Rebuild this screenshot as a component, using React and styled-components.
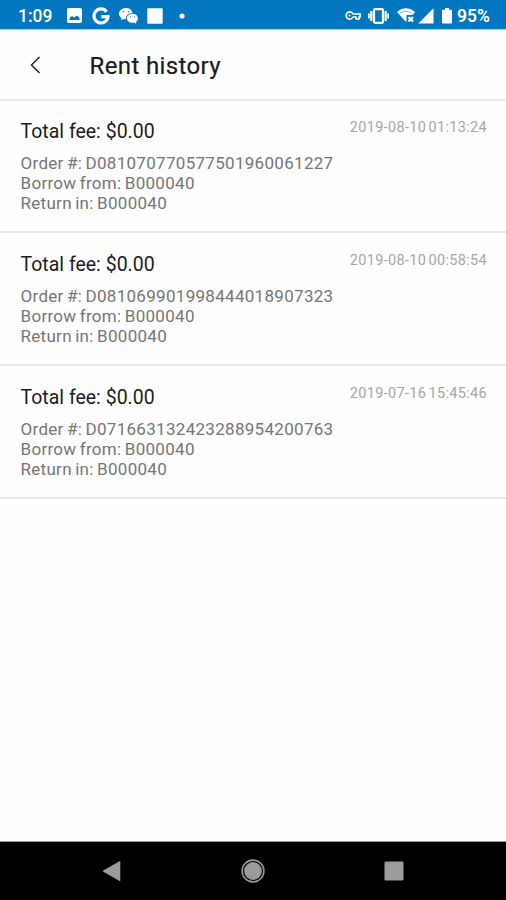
import React from 'react';
import styled, { createGlobalStyle } from 'styled-components';

const GlobalStyle = createGlobalStyle`
  * {
    box-sizing: border-box;
  }

  body {
    margin: 0;
    background: #fff;
    font-family: Roboto, 'Liberation Sans', sans-serif;
  }
`;

const Screen = styled.div`
  display: flex;
  flex-direction: column;
  width: 100%;
  height: 100vh;
  background: #fefefe;
`;

const StatusBar = styled.div`
  display: flex;
  align-items: center;
  justify-content: space-between;
  flex: none;
  height: 30px;
  padding: 2px 17px 0 18px;
  background: #0277c0;
  border-bottom: 1px solid #a9cfe9;
  color: #fff;
`;

const StatusGroup = styled.div`
  display: flex;
  align-items: center;
`;

const StatusText = styled.span`
  width: ${({ $width }) => $width}px;
  margin-left: ${({ $gap }) => $gap || 0}px;
  padding-top: 1px;
  font-size: 17.5px;
  font-weight: ${({ $weight }) => $weight || 500};
  line-height: 20px;
  white-space: nowrap;
`;

const Icon = styled.svg`
  display: block;
  flex: none;
  margin-left: ${({ $gap }) => $gap || 0}px;
  fill: currentColor;
`;

const Header = styled.header`
  display: flex;
  align-items: center;
  flex: none;
  height: 71px;
  padding: 0 30px;
  border-bottom: 2px solid #e8e8e8;
`;

const BackButton = styled.button`
  display: flex;
  padding: 0;
  border: 0;
  background: none;
  color: #222;
`;

const Title = styled.h1`
  margin: 2px 0 0 48.5px;
  color: #1a1a1a;
  font-size: 24px;
  font-weight: 400;
  line-height: 30px;
  letter-spacing: 0.38px;
  -webkit-text-stroke: 0.2px #1a1a1a;
`;

const List = styled.main`
  flex: 1;
`;

const Row = styled.article`
  height: 133px;
  padding: 18px 19px 0 20.5px;
  border-bottom: 2px solid #e8e8e8;

  &:first-child {
    height: 132px;
    padding-top: 17px;
  }
`;

const RowTop = styled.div`
  display: flex;
  justify-content: space-between;
  align-items: flex-start;
`;

const Fee = styled.h2`
  margin: 0;
  color: #1c1c1c;
  font-size: 19.5px;
  font-weight: 400;
  line-height: 27px;
`;

const Time = styled.time`
  padding-top: 1px;
  color: #a6a6a6;
  font-size: 14.5px;
  line-height: 18px;
  letter-spacing: 0.33px;
  word-spacing: -1.8px;
`;

const Details = styled.div`
  margin-top: 8px;
  color: #757575;
  font-size: 17px;
  line-height: 20px;
  letter-spacing: 0.3px;
  word-spacing: -1.2px;
`;

const NavBar = styled.nav`
  display: flex;
  align-items: center;
  justify-content: space-between;
  flex: none;
  height: 59px;
  padding: 0 102px;
  border-top: 1px solid #999;
  background: #000;
  color: #9b9b9b;
`;

const orders = [
  { time: '2019-08-10 01:13:24', number: 'D081070770577501960061227' },
  { time: '2019-08-10 00:58:54', number: 'D081069901998444018907323' },
  { time: '2019-07-16 15:45:46', number: 'D071663132423288954200763' },
];

const App = () => {
  return (
    <Screen>
      <GlobalStyle />
      <StatusBar>
        <StatusGroup>
          <StatusText $width={34}>1:09</StatusText>
          <Icon $gap={15} width="15" height="15" viewBox="3 3 18 18">
            <path d="M21 19V5c0-1.100-.9-2-2-2H5c-1.100 0-2 .9-2 2v14c0 1.100.9 2 2 2h14c1.100 0 2-.9 2-2zM6 17.500v-2.500l3-2.500 2.500 2 3.500-2.500 3 3v2.500z" fillRule="evenodd" />
          </Icon>
          <Icon $gap={10} width="18" height="18" viewBox="0 0 18 18">
            <path d="M14.600 4.700A7 7 0 1 0 16 9.600H9.300" fill="none" stroke="currentColor" strokeWidth="3.200" />
          </Icon>
          <Icon $gap={9} width="19" height="16" viewBox="0 0 19 16">
            <path d="M7 0C3 0 0 2.600 0 5.700 0 7.500 1 9 2.500 10L2 12.200 4.500 11c.8.200 1.500.3 2.300.3C6.400 7.700 9.500 5 13.500 5 13 2 10.300 0 7 0zM4.500 4.600a.8.8 0 1 1 0-1.600.8.8 0 0 1 0 1.600zm5 0a.8.8 0 1 1 0-1.600.8.8 0 0 1 0 1.600z" fillRule="evenodd" />
            <path d="M19 10.300c0-2.500-2.500-4.500-5.600-4.500s-5.600 2-5.600 4.500 2.500 4.500 5.600 4.500c.6 0 1.200-.1 1.800-.3L17.300 16l-.5-2c1.400-.9 2.200-2.200 2.200-3.700zM11.500 9.400a.6.6 0 1 1 0-1.200.6.6 0 0 1 0 1.200zm4 0a.6.6 0 1 1 0-1.200.6.6 0 0 1 0 1.200z" fillRule="evenodd" />
          </Icon>
          <Icon $gap={9} width="16" height="16" viewBox="0 0 16 16">
            <rect x="0.300" y="0.300" width="15.400" height="15.400" rx="0.700" />
          </Icon>
          <Icon $gap={16} width="6" height="6" viewBox="0 0 6 6">
            <circle cx="3" cy="3" r="2.600" />
          </Icon>
        </StatusGroup>
        <StatusGroup>
          <Icon width="16" height="9" viewBox="0 0 16 9">
            <path d="M8 3A3.600 3.600 0 1 0 8 6h3v2h3V6h1.200V3z" fill="none" stroke="currentColor" strokeWidth="1.700" strokeLinejoin="round" />
            <circle cx="4.500" cy="4.500" r="1.100" />
          </Icon>
          <Icon $gap={7} width="21" height="16" viewBox="0 0 21 16">
            <rect x="6" y="1.200" width="9" height="13.600" rx="1" fill="none" stroke="currentColor" strokeWidth="2.200" />
            <path d="M2.200 3h2.200v10H2.200zM0 5.500h1.800v5H0zM16.600 3h2.200v10h-2.200zM19.200 5.500H21v5h-1.800z" />
          </Icon>
          <Icon $gap={8} width="19" height="15" viewBox="0 0 19 15">
            <path d="M0 4C5-1.100 13-1.100 18 4l-2.500 3H9.500v5.500L9 14z" />
            <path d="M2.600 5.700C6.500 2.700 11 2.700 15 5.600" fill="none" stroke="#0277c0" strokeWidth="0.500" />
            <path d="M11.500 9l4.500 4.500M16 9l-4.500 4.500" stroke="currentColor" strokeWidth="2.200" />
          </Icon>
          <Icon $gap={2} width="16" height="16" viewBox="0 0 16 16">
            <path d="M15.500.3v15.200H.3z" />
          </Icon>
          <Icon $gap={8} width="10" height="16" viewBox="0 0 10 16">
            <path d="M3 0h4v1.700h2.200q.8 0 .8.800v12.300q0 .8-.8.800H.8Q0 15.600 0 14.800V2.500q0-.8.8-.8H3z" />
          </Icon>
          <StatusText $width={32} $gap={5} $weight={600}>95%</StatusText>
        </StatusGroup>
      </StatusBar>
      <Header>
        <BackButton aria-label="Back">
          <Icon width="11" height="18" viewBox="0 0 11 18">
            <path d="M9.500 1L1.500 9l8 8" fill="none" stroke="currentColor" strokeWidth="1.500" />
          </Icon>
        </BackButton>
        <Title>Rent history</Title>
      </Header>
      <List>
        {orders.map((order) => (
          <Row key={order.number}>
            <RowTop>
              <Fee>Total fee: $0.00</Fee>
              <Time>{order.time}</Time>
            </RowTop>
            <Details>
              <div>Order #: {order.number}</div>
              <div>Borrow from: B000040</div>
              <div>Return in: B000040</div>
            </Details>
          </Row>
        ))}
      </List>
      <NavBar>
        <Icon width="20" height="22" viewBox="0 0 20 22">
          <path d="M18.300 1.500v19.200q0 .8-.8.300L1.300 11.700q-.7-.6 0-1.200L17.500 1.200q.8-.4.8.3z" />
        </Icon>
        <Icon width="24" height="24" viewBox="0 0 24 24">
          <circle cx="12" cy="12" r="8.900" />
          <circle cx="12" cy="12" r="10.900" fill="none" stroke="currentColor" strokeWidth="1.600" />
        </Icon>
        <Icon width="20" height="20" viewBox="0 0 20 20">
          <rect x="0.500" y="0.500" width="19" height="19" rx="1.200" />
        </Icon>
      </NavBar>
    </Screen>
  );
};

export default App;
